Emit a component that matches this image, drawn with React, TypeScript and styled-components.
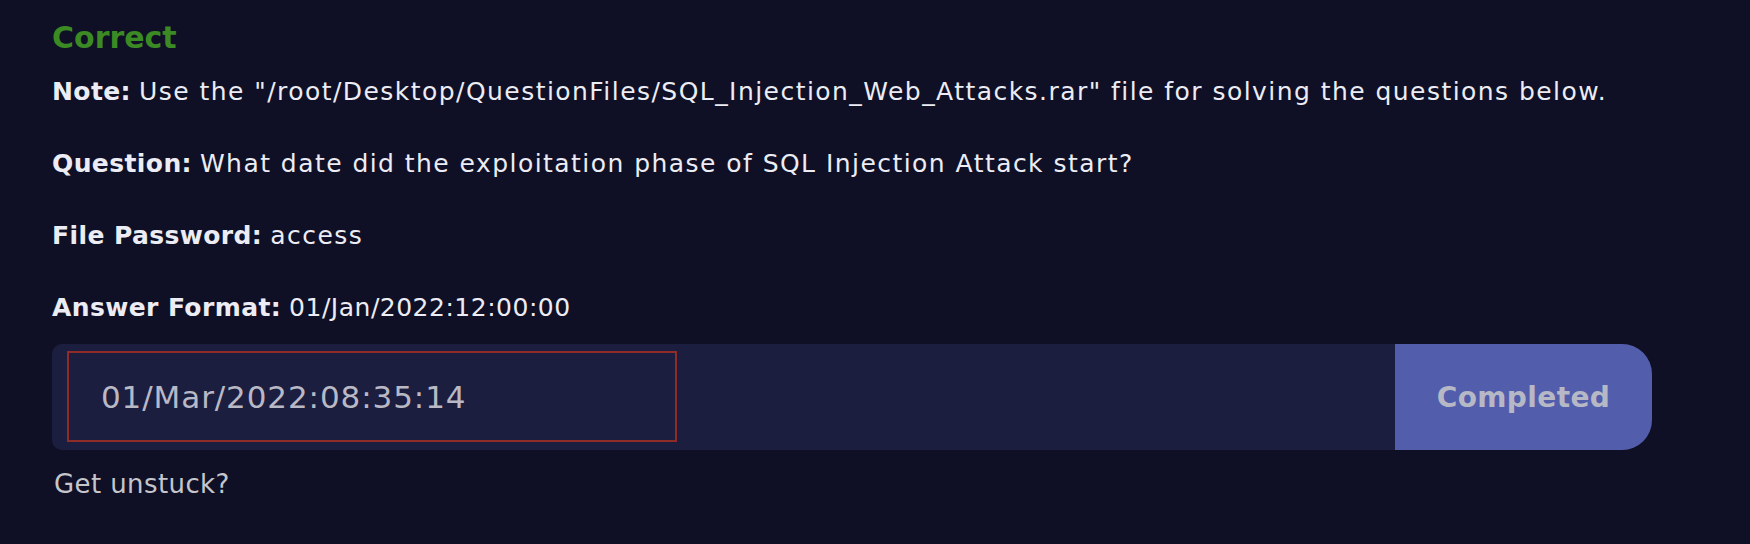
import React from "react";
import styled, { createGlobalStyle } from "styled-components";

const GlobalStyle = createGlobalStyle`
  html, body {
    margin: 0;
    padding: 0;
    background-color: #0f1026;
  }
  body {
    font-family: "DejaVu Sans", "Open Sans", sans-serif;
    color: #ececf4;
  }
`;

const Page = styled.div`
  min-height: 544px;
  padding: 18px 52px 0 52px;
  box-sizing: border-box;
`;

const Status = styled.h3`
  margin: 0 0 16px 0;
  font-size: 30px;
  line-height: 40px;
  font-weight: 700;
  color: #3b8a24;
`;

const Paragraph = styled.p`
  margin: 0 0 36px 0;
  font-size: 25px;
  line-height: 36px;
  color: #ececf4;

  &:last-of-type {
    margin-bottom: 18px;
  }
`;

const Label = styled.strong`
  font-weight: 700;
  letter-spacing: 0.4px;
`;

const Value = styled.span<{ $spacing?: number }>`
  letter-spacing: ${(props) => props.$spacing ?? 1.45}px;
`;

const AnswerRow = styled.form`
  display: flex;
  align-items: stretch;
  width: 1600px;
  height: 106px;
  background-color: #1c1e3f;
  border-radius: 10px 30px 30px 10px;
  box-sizing: border-box;
`;

const InputWrap = styled.div`
  flex: 1;
  display: flex;
  align-items: flex-start;
  padding: 7px 0 0 15px;
`;

const AnswerInput = styled.input`
  width: 610px;
  height: 91px;
  box-sizing: border-box;
  padding: 0 0 0 32px;
  border: 2px solid #8f2c27;
  background-color: #1c1e3f;
  color: #b9b9c6;
  font-family: "DejaVu Sans", "Open Sans", sans-serif;
  font-size: 31px;
  letter-spacing: 0.9px;
  outline: none;
`;

const SubmitButton = styled.button<{ $done?: boolean }>`
  width: 257px;
  border: none;
  border-radius: 0 30px 30px 0;
  background-color: #525eac;
  color: ${(props) => (props.$done ? "#b7b8c6" : "#ffffff")};
  font-family: "DejaVu Sans", "Open Sans", sans-serif;
  font-size: 28px;
  font-weight: 700;
  letter-spacing: 0.4px;
  cursor: ${(props) => (props.$done ? "default" : "pointer")};
`;

const HelpLink = styled.a`
  display: inline-block;
  margin-top: 16px;
  padding-left: 2px;
  font-size: 26px;
  line-height: 36px;
  letter-spacing: 0.4px;
  color: #c5c5cc;
  text-decoration: none;
  cursor: pointer;
`;

const lines = [
  {
    label: "Note:",
    text: 'Use the "/root/Desktop/QuestionFiles/SQL_Injection_Web_Attacks.rar" file for solving the questions below.',
  },
  {
    label: "Question:",
    text: "What date did the exploitation phase of SQL Injection Attack start?",
  },
  { label: "File Password:", text: "access" },
  { label: "Answer Format:", text: "01/Jan/2022:12:00:00", spacing: 0.5 },
];

const App = () => {
  return (
    <>
      <GlobalStyle />
      <Page>
        <Status>Correct</Status>
        {lines.map((line) => (
          <Paragraph key={line.label}>
            <Label>{line.label}</Label>{" "}
            <Value $spacing={line.spacing}>{line.text}</Value>
          </Paragraph>
        ))}
        <AnswerRow onSubmit={(e) => e.preventDefault()}>
          <InputWrap>
            <AnswerInput defaultValue="01/Mar/2022:08:35:14" readOnly />
          </InputWrap>
          <SubmitButton type="submit" $done disabled>
            Completed
          </SubmitButton>
        </AnswerRow>
        <HelpLink>Get unstuck?</HelpLink>
      </Page>
    </>
  );
};

export default App;
